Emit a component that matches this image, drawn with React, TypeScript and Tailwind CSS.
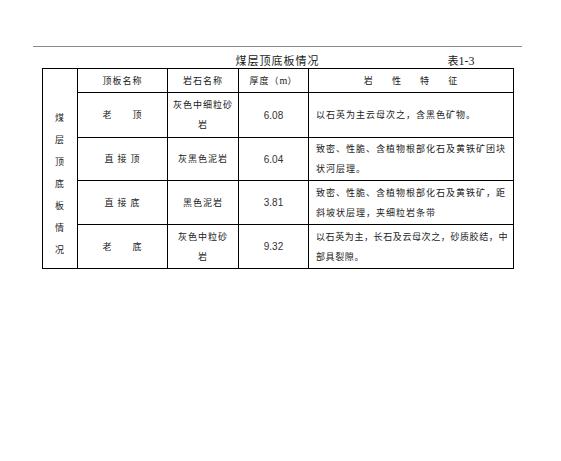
import React from 'react';

const cjk = { fontFamily: '"Noto Sans CJK SC", "Noto Sans", sans-serif' };

type Row = {
  name: React.ReactNode;
  rock: React.ReactNode;
  thick: string;
  desc: React.ReactNode;
  h: string;
  tight?: boolean;
};

const rows: Row[] = [
  {
    name: '老\u3000\u3000顶',
    rock: (
      <>
        灰色中细粒砂
        <br />岩
      </>
    ),
    thick: '6.08',
    desc: '以石英为主云母次之，含黑色矿物。',
    h: 'h-[45px]',
  },
  {
    name: '直 接 顶',
    rock: '灰黑色泥岩',
    thick: '6.04',
    desc: (
      <>
        致密、性脆、含植物根部化石及黄铁矿团块
        <br />状河层理。
      </>
    ),
    h: 'h-[43px]',
  },
  {
    name: '直 接 底',
    rock: '黑色泥岩',
    thick: '3.81',
    desc: (
      <>
        致密、性脆、含植物根部化石及黄铁矿，距
        <br />斜坡状层理，夹细粒岩条带
      </>
    ),
    h: 'h-[44px]',
  },
  {
    name: '老\u3000\u3000底',
    rock: (
      <>
        灰色中粒砂
        <br />岩
      </>
    ),
    thick: '9.32',
    desc: (
      <>
        以石英为主，长石及云母次之，砂质胶结，中
        <br />部具裂隙。
      </>
    ),
    h: 'h-[44px]',
    tight: true,
  },
];

export default function App() {
  return (
    <div className="w-[561px] h-[461px] bg-white text-[#1a1a1a]" style={cjk}>
      <div className="pt-[46px] pl-[33px]">
        <div className="w-[489px] border-t border-[#8a8a8a]">
          {/* title row */}
          <div className="grid grid-cols-[1fr_auto_1fr] h-[21px] pt-[6px]">
            <div />
            <div className="text-[11px] leading-[14px] tracking-[1px]">煤层顶底板情况</div>
            <div
              className="pl-[128px] text-[11px] leading-[14px]"
              style={{ fontFamily: '"Noto Sans CJK SC", sans-serif' }}
            >
              表<span style={{ fontFamily: '"Liberation Serif", serif' }} className="text-[12px]">1-3</span>
            </div>
          </div>

          <table className="ml-[9px] w-[471px] border-collapse table-fixed text-[9px] tracking-[1px]">
            <colgroup>
              <col className="w-[35px]" />
              <col className="w-[90px]" />
              <col className="w-[71px]" />
              <col className="w-[70px]" />
              <col className="w-[205px]" />
            </colgroup>
            <tbody>
              <tr className="h-[24px]">
                <td rowSpan={5} className="border border-black align-top pt-[38px] text-center">
                  {'煤层顶底板情况'.split('').map((c) => (
                    <div key={c} className="leading-[22px]">
                      {c}
                    </div>
                  ))}
                </td>
                <td className="border border-black text-center">顶板名称</td>
                <td className="border border-black text-center">岩石名称</td>
                <td className="border border-black text-center">
                  厚度（<span style={{ fontFamily: '"Liberation Serif", serif' }} className="text-[10px] tracking-normal">m</span>）
                </td>
                <td className="border border-black text-center whitespace-pre">岩      性      特      征</td>
              </tr>
              {rows.map((r, i) => (
                <tr key={i} className={r.h}>
                  <td className="border border-black text-center whitespace-pre">{r.name}</td>
                  <td className="border border-black text-center leading-[20px]">{r.rock}</td>
                  <td
                    className="border border-black text-center text-[10px] tracking-normal text-[#333]"
                    style={{ fontFamily: '"Liberation Sans", sans-serif' }}
                  >
                    {r.thick}
                  </td>
                  <td
                    className={`border border-black pl-[7px] leading-[20px] whitespace-nowrap ${
                      r.tight ? 'tracking-[0.6px]' : ''
                    }`}
                  >
                    {r.desc}
                  </td>
                </tr>
              ))}
            </tbody>
          </table>
        </div>
      </div>
    </div>
  );
}
